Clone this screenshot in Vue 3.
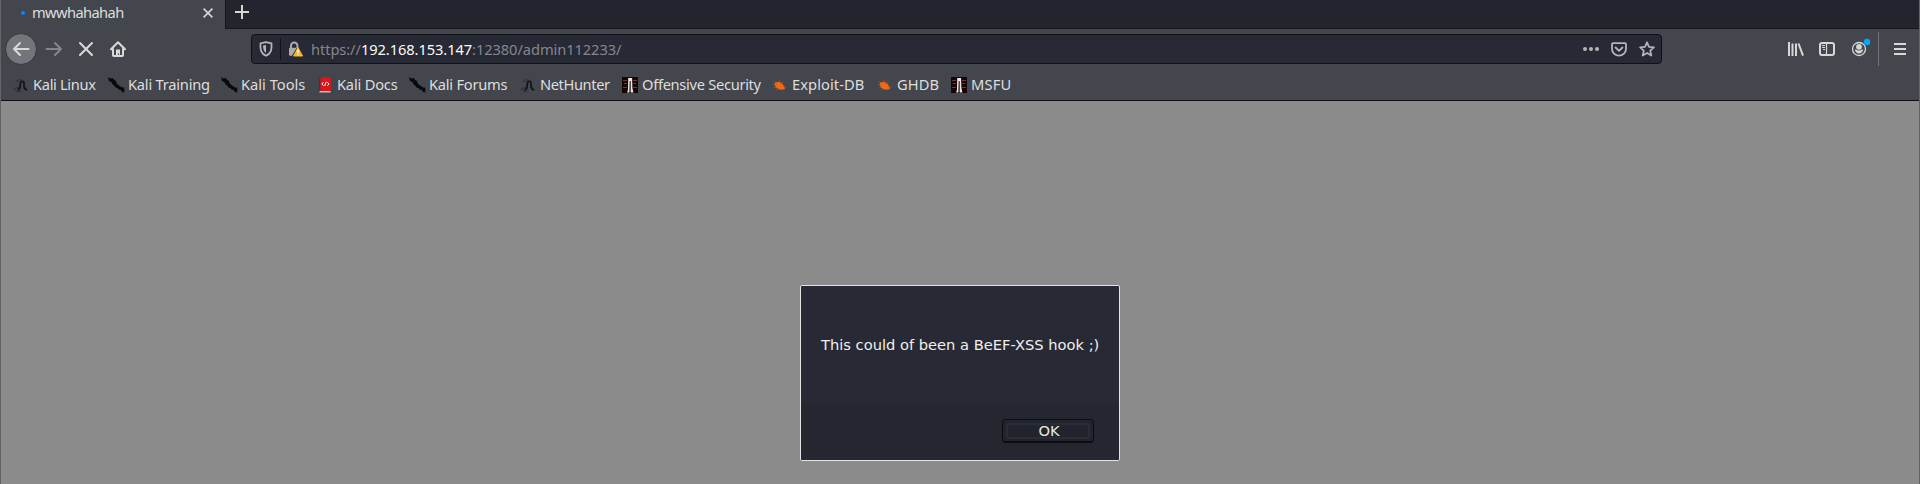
<script setup>
const bookmarks = [
  { label: 'Kali Linux', icon: 'dragon', width: 95, spacing: -0.33 },
  { label: 'Kali Training', icon: 'blade', width: 113, spacing: -0.22 },
  { label: 'Kali Tools', icon: 'blade', width: 96, spacing: 0 },
  { label: 'Kali Docs', icon: 'book', width: 92, spacing: -0.2 },
  { label: 'Kali Forums', icon: 'blade', width: 111, spacing: -0.25 },
  { label: 'NetHunter', icon: 'dragon', width: 102, spacing: -0.4 },
  { label: 'Offensive Security', icon: 'offsec', width: 150, spacing: -0.3 },
  { label: 'Exploit-DB', icon: 'bug', width: 105, spacing: 0.08 },
  { label: 'GHDB', icon: 'bug', width: 74, spacing: 0.1 },
  { label: 'MSFU', icon: 'offsec', width: 70, spacing: 0.2 },
]
</script>

<template>
  <div class="browser">
    <header class="chrome">
      <div class="tabs">
        <div class="tab">
          <i class="loading"></i>
          <span class="title">mwwhahahah</span>
          <svg class="close" width="12" height="12" viewBox="0 0 12 12"><path d="M1.600 1.600l8.800 8.800M10.400 1.600l-8.800 8.800" /></svg>
        </div>
        <svg class="plus" width="14" height="14" viewBox="0 0 14 14"><path d="M7 0v14M0 7h14" /></svg>
      </div>
      <div class="toolbar">
        <div class="nav">
          <span class="back"><svg width="18" height="16" viewBox="0 0 18 16"><path d="M16.500 8H2M8 2L2 8l6 6" /></svg></span>
          <svg class="forward" width="18" height="16" viewBox="0 0 18 16"><path d="M1.500 8h14.500M10 2l6 6-6 6" /></svg>
          <svg class="stop" width="16" height="16" viewBox="0 0 16 16"><path d="M2 2l12 12M14 2L2 14" /></svg>
          <svg class="home" width="16" height="16" viewBox="0 0 16 16">
            <path d="M1 8.300L8 1.300l7 7M3 8v6.200q0 .8.800.800h8.400q.8 0 .8-.8V8" />
            <path class="solid" d="M6 8.500h4V15H9v-2.500H8V15H6z" />
          </svg>
        </div>
        <div class="url">
          <svg class="shield" width="14" height="16" viewBox="0 0 14 16">
            <path d="M7 1.200L12.500 2.300q.4 5.200-.8 8T7 14.800Q3.500 13.100 2.300 10.300t-.8-8z" />
            <path class="half" d="M7 4L4 4.600Q4 10.300 7 12z" />
          </svg>
          <i class="rule"></i>
          <svg class="lock" width="16" height="16" viewBox="0 0 16 16">
            <path class="shackle" d="M3 7.500V4.700a3.200 3.200 0 016.400 0V7" />
            <path class="body" d="M2 6.800h6.800L4 14.800H2q-1 0-1-1v-6q0-1 1-1z" />
            <path class="warn" d="M10 6.600L14.600 15H5.600z" />
            <path class="mark" d="M10.100 8.600v3.300M10.100 13v1.300" />
          </svg>
          <span class="address"><span class="scheme">https://</span><span class="host">192.168.153.147</span><span class="path">:12380/admin112233/</span></span>
          <svg class="dots" width="16" height="4" viewBox="0 0 16 4"><circle cx="2" cy="2" r="2" /><circle cx="8" cy="2" r="2" /><circle cx="14" cy="2" r="2" /></svg>
          <svg class="pocket" width="16" height="15" viewBox="0 0 16 15"><path d="M2 1.200h12q1 0 1 1V7a7 6.600 0 01-14 0V2.200q0-1 1-1z" /><path d="M4.600 5.500L8 8.800l3.400-3.300" /></svg>
          <svg class="star" width="16" height="16" viewBox="0 0 16 16"><path d="M8 1.300l2 4.500 4.900.5-3.700 3.300 1.100 4.900L8 12l-4.300 2.500 1.100-4.900L1.100 6.300 6 5.800z" /></svg>
        </div>
        <div class="actions">
          <svg class="library" width="16" height="16" viewBox="0 0 16 16"><path d="M1 1v14M4.500 2.500V15M8 2.500V15M10.500 2.500L15 14.700" /></svg>
          <svg class="sidebar" width="16" height="14" viewBox="0 0 16 14"><rect x="1" y="1" width="14" height="12" rx="2" /><path class="thin" d="M7.500 1v12" /><path class="thin" d="M3 3.500h3M3 5.500h3M4 7.500h2" /></svg>
          <svg class="account" width="20" height="20" viewBox="0 0 20 20">
            <circle class="ring" cx="8" cy="12" r="6.500" /><circle class="solid" cx="8" cy="9.800" r="2.900" />
            <path class="solid" d="M3.700 12.600q1.600-.5 2.300.4q2 1.100 4 0q.7-.9 2.300-.4q-1.300 4-4.300 4t-4.300-4z" />
            <circle class="badge" cx="16" cy="5" r="3.200" />
          </svg>
          <i class="divider"></i>
          <svg class="menu" width="12" height="12" viewBox="0 0 12 12"><path d="M0 1h12M0 6h12M0 11h12" /></svg>
        </div>
      </div>
      <nav class="bookmarks">
        <span v-for="b in bookmarks" :key="b.label" class="bookmark" :style="{ width: b.width + 'px', letterSpacing: b.spacing + 'px' }">
          <svg v-if="b.icon === 'dragon'" width="16" height="16" viewBox="0 0 16 16">
            <path class="mist" d="M1 13q2.500-3 5.500-3M3 5q3-3 6-2M2.500 14.500h6" />
            <path class="ink" d="M4.500 13Q7 12.500 7 9.500T8 4.500Q11.500 3.500 11 7.500Q10.800 11.500 14 13.300" />
          </svg>
          <svg v-else-if="b.icon === 'blade'" width="16" height="16" viewBox="0 0 16 16">
            <path class="black" d="M0 0l2.300 1.500L4.700 1l1 1.600L8 4l.5 2.300L11 8.400l3 2 2.300.1V15.500L14 15l-1.200-1.900-2.300-.5-1.200-1.500-1.500-.3-1.300-2-2-1.300L3.600 5.200 1 4z" />
          </svg>
          <svg v-else-if="b.icon === 'book'" width="16" height="16" viewBox="0 0 16 16">
            <path fill="#243b63" d="M2 .500h2v14L2 13z" /><path fill="#dc1519" d="M3.300.500h10.500V14H3.300z" /><path fill="#c9bfc0" d="M2.500 14h11v1.500h-11z" />
            <path class="code" d="M6.500 5.200L4.800 7l1.700 1.500M10.300 5.200L12 7l-1.700 1.500M9.200 4.800L7.700 9" />
          </svg>
          <svg v-else-if="b.icon === 'offsec'" width="16" height="16" viewBox="0 0 16 16">
            <path fill="#180607" d="M0 0h16v16H0z" /><path stroke="#663b3c" stroke-width="1" d="M1 3.500h4M11 3.500h4M2 6.500h3M11 6.500h3M1 10.500h4M11 10.500h4" />
            <path fill="#eee7e3" d="M6.200 1h3.900l.3 10 1 4.500H8.700V4h-1l-.3 11.500H5.200l.8-3z" />
          </svg>
          <svg v-else width="16" height="16" viewBox="0 0 16 16">
            <path fill="#f26a11" d="M3 5.500l2.500-.6 2 .2 3 2 1.700 2.300.8 2.600-3 .8-3.300-.6L4 10.500 2.700 8z" />
            <path class="legs" d="M1 7.500l4 1M1.500 4.500l4 2M7 2.500l1.500 4M11 4.500l-.5 3M1.500 11l3-.8M4 13l2-1.500M11 9.500l3.500.5" />
          </svg>
          <span class="label">{{ b.label }}</span>
        </span>
      </nav>
    </header>
    <main class="page">
      <section class="dialog">
        <div class="message">This could of been a BeEF-XSS hook ;)</div>
        <footer class="buttons"><button class="ok"><span>OK</span></button></footer>
      </section>
    </main>
  </div>
</template>

<style>
body { margin: 0; background: #8b8b8b; }
</style>

<style scoped>
* { box-sizing: border-box; }
.browser { height: 484px; overflow: hidden; display: flex; flex-direction: column; background: #8b8b8b; border: solid #626468; border-width: 0 1px; font-family: "Noto Sans", sans-serif; font-size: 14.67px; color: #dededd; }
svg { display: block; flex: none; fill: none; stroke: none; overflow: visible; }
.chrome { height: 101px; flex: none; background: #44464d; border-bottom: 1px solid #0d0e12; }
.tabs { height: 29px; display: flex; align-items: flex-start; background: #22242e; border-bottom: 1px solid #15171d; }
.tab { width: 225px; height: 29px; display: flex; align-items: center; padding: 0 11px 3px 20px; background: #44464d; border-right: 1px solid #15171d; }
.loading { width: 4px; height: 4px; border-radius: 50%; background: #0a84ff; margin-right: 7px; }
.title { flex: 1; line-height: 20px; margin-top: -2px; letter-spacing: -.6px; white-space: nowrap; }
.close { stroke: #d7d7d6; stroke-width: 1.6; }
.plus { margin: 5px 0 0 9px; stroke: #d7d7d6; stroke-width: 2; }
.toolbar { height: 40px; display: flex; align-items: center; }
.nav { width: 250px; display: flex; align-items: center; padding-left: 4px; }
.back { width: 32px; height: 32px; border-radius: 50%; background: #74757a; border: 1px solid #36383d; display: flex; align-items: center; justify-content: center; }
.nav svg { stroke: #d9d9d8; stroke-width: 2; stroke-linecap: round; stroke-linejoin: round; }
.nav .forward { stroke: #85868a; margin-left: 8px; }
.nav .stop { margin-left: 15px; }
.nav .home { margin-left: 16px; }
.nav .home .solid { fill: #d9d9d8; stroke: none; }
.url { width: 1411px; height: 30px; display: flex; align-items: center; padding: 0 6px 0 7px; background: #272934; border: 1px solid #101116; border-radius: 4px; }
.shield, .pocket, .star { stroke: #b4b5b7; stroke-width: 1.8; stroke-linejoin: round; stroke-linecap: round; }
.shield .half { fill: #b4b5b7; stroke: none; }
.rule { width: 1px; height: 22px; background: #111319; margin: 0 7px 0 7px; }
.shackle { stroke: #aaabad; stroke-width: 2; }
.body { fill: #aaabad; }
.warn { fill: #ffb71c; stroke: #ffb71c; stroke-linejoin: round; }
.mark { stroke: #fff; stroke-width: 1.4; }
.address { flex: 1; margin-left: 7px; white-space: nowrap; color: #85868d; letter-spacing: -.08px; line-height: 24px; }
.host { color: #fbfbfb; }
.dots { fill: #b4b5b7; margin-right: 12px; }
.pocket { margin-right: 12px; }
.actions { display: flex; align-items: center; margin-left: 126px; stroke: #d7d7d6; }
.library { stroke: #d7d7d6; stroke-width: 2; margin-right: 15px; }
.sidebar { stroke: #d7d7d6; stroke-width: 2; margin-right: 16px; }
.sidebar .thin { stroke-width: 1.2; }
.account { margin: -4px 7px 0 0; }
.ring { stroke: #d7d7d6; stroke-width: 1.3; }
.account .solid { fill: #d7d7d6; }
.badge { fill: #00a7f5; }
.divider { width: 1px; height: 34px; background: #717378; }
.menu { margin-left: 15px; stroke: #d7d7d6; stroke-width: 2; }
.bookmarks { height: 31px; display: flex; align-items: center; padding-left: 12px; }
.bookmark { display: flex; align-items: center; flex: none; }
.label { margin: -2px 0 0 4px; white-space: nowrap; line-height: 20px; }
.mist { stroke: #303237; stroke-width: 1.2; }
.ink { stroke: #141518; stroke-width: 1.8; }
.black { fill: #08090a; }
.code { stroke: #fff; stroke-width: 1; }
.legs { stroke: #b25c2b; stroke-width: .6; }
.page { flex: 1; display: flex; justify-content: center; align-items: flex-start; padding-top: 184px; }
.dialog { width: 320px; height: 176px; border: 1px solid #e3e3e3; border-radius: 2px; background: #272934; overflow: hidden; font-family: "DejaVu Sans", sans-serif; color: #f0f0ee; }
.message { height: 119px; padding: 49px 0 0 20px; font-size: 14.67px; line-height: 20px; white-space: nowrap; }
.buttons { height: 55px; background: #252730; display: flex; justify-content: flex-end; padding: 14px 25px 0 0; }
.ok { width: 92px; height: 24px; padding: 3px; background: #22242d; border: 1px solid #0c0d11; border-bottom-width: 2px; border-radius: 4px; color: #e8e8e6; font: 14.67px/15px "DejaVu Sans", sans-serif; }
.ok span { display: block; height: 16px; border: 2px solid #2b2d36; border-radius: 2px; line-height: 11px; padding-left: 2px; }
</style>
